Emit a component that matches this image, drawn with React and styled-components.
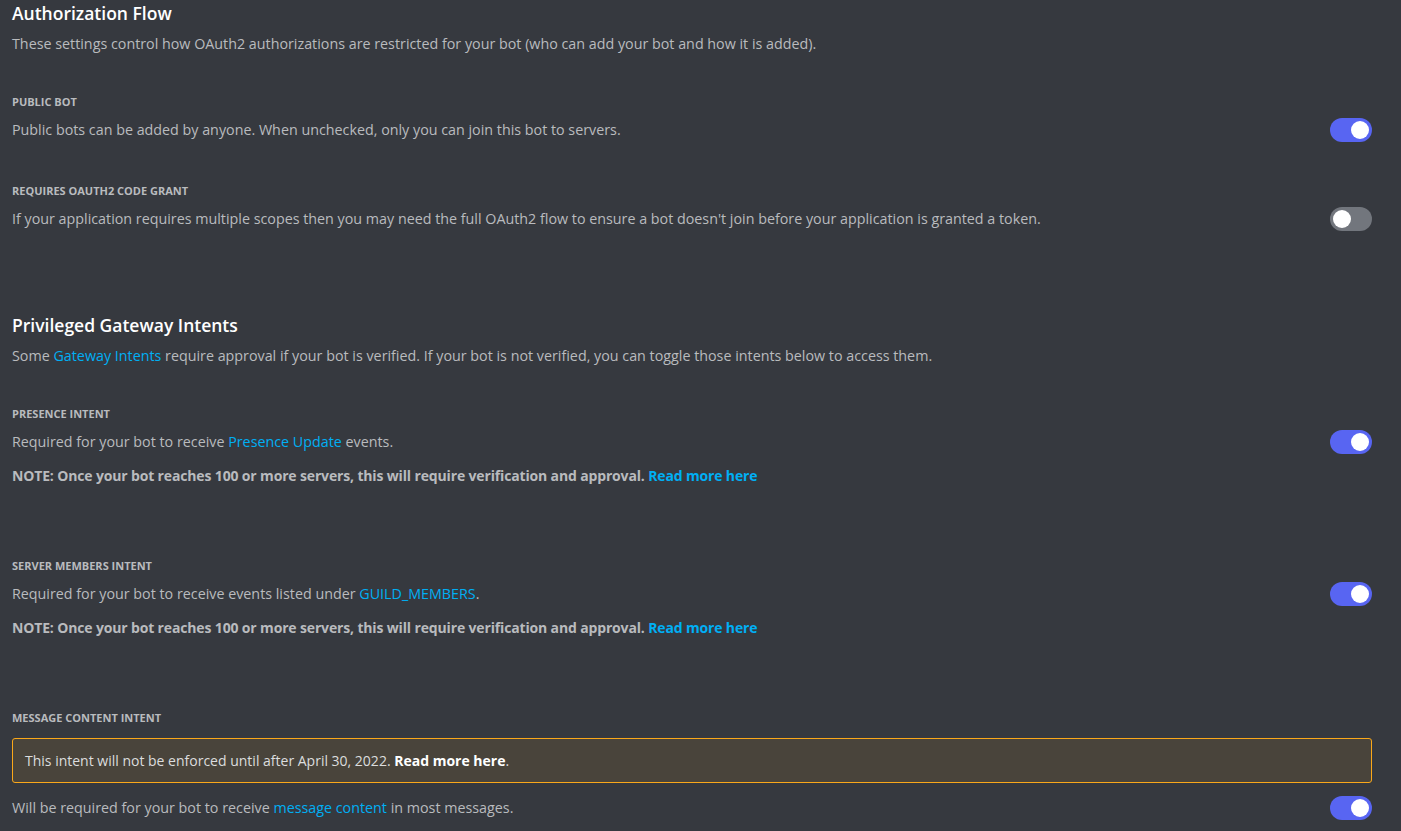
import React from 'react';
import styled, { createGlobalStyle } from 'styled-components';

const GlobalStyle = createGlobalStyle`
  html, body {
    margin: 0;
    padding: 0;
    background: #36393f;
  }
  body {
    font-family: "Open Sans", "Noto Sans", sans-serif;
    -webkit-font-smoothing: antialiased;
  }
`;

const Page = styled.main`
  min-height: 831px;
  box-sizing: border-box;
  padding: 1px 29px 0 12px;
  background: #36393f;
  color: #b9bbbe;
  overflow: hidden;
`;

const Section = styled.section`
  display: flex;
  flex-direction: column;
  margin-bottom: ${(p) => p.$gap || 0}px;
`;

const SectionTitle = styled.h2`
  margin: 0;
  font-size: 17.5px;
  line-height: 24px;
  font-weight: 600;
  color: #ffffff;
`;

const SectionDesc = styled.p`
  margin: 9px 0 0;
  font-size: 14.3px;
  line-height: 20px;
  color: #b9bbbe;
`;

const Setting = styled.div`
  display: flex;
  flex-direction: column;
  margin-top: ${(p) => p.$top}px;
`;

const Label = styled.h5`
  margin: 0 0 8px;
  font-size: 11px;
  line-height: 16px;
  font-weight: 700;
  text-transform: uppercase;
  color: #b9bbbe;
`;

const Row = styled.div`
  display: flex;
  align-items: center;
  justify-content: space-between;
  gap: 24px;
`;

const Text = styled.div`
  font-size: 14.3px;
  line-height: 20px;
  color: #b9bbbe;
`;

const Note = styled.div`
  margin-top: 12px;
  font-size: 14px;
  line-height: 20px;
  font-weight: 700;
  letter-spacing: -0.15px;
  color: #b9bbbe;
`;

const Link = styled.a`
  color: #00aff4;
  text-decoration: none;
  font-weight: inherit;
  cursor: pointer;
`;

const Toggle = styled.div`
  position: relative;
  flex-shrink: 0;
  width: 42px;
  height: 24px;
  border-radius: 12px;
  background: ${(p) => (p.$on ? '#5865f2' : '#72767d')};
`;

const Knob = styled.span`
  position: absolute;
  top: 3px;
  left: ${(p) => (p.$on ? '21px' : '3px')};
  width: 18px;
  height: 18px;
  border-radius: 50%;
  background: #ffffff;
`;

const Warning = styled.div`
  box-sizing: border-box;
  height: 45px;
  display: flex;
  align-items: center;
  padding: 0 12px;
  margin: 4px 0 13px;
  border: 1px solid #faa81a;
  border-radius: 3px;
  background: rgba(250, 168, 26, 0.1);
  font-size: 14px;
  line-height: 20px;
  color: #dcddde;

  strong {
    color: #ffffff;
    font-weight: 700;
  }
`;

const Switch = ({ on }) => (
  <Toggle $on={on}>
    <Knob $on={on} />
  </Toggle>
);

const App = () => (
  <>
    <GlobalStyle />
    <Page>
      <Section $gap={82}>
        <SectionTitle>Authorization Flow</SectionTitle>
        <SectionDesc>
          These settings control how OAuth2 authorizations are restricted for your bot (who can add your bot and how it is added).
        </SectionDesc>
        <Setting $top={40}>
          <Label>Public Bot</Label>
          <Row>
            <Text>Public bots can be added by anyone. When unchecked, only you can join this bot to servers.</Text>
            <Switch on />
          </Row>
        </Setting>
        <Setting $top={41}>
          <Label>Requires OAuth2 Code Grant</Label>
          <Row>
            <Text>
              If your application requires multiple scopes then you may need the full OAuth2 flow to ensure a bot doesn't join before your application is granted a token.
            </Text>
            <Switch on={false} />
          </Row>
        </Setting>
      </Section>

      <Section>
        <SectionTitle>Privileged Gateway Intents</SectionTitle>
        <SectionDesc>
          Some <Link>Gateway Intents</Link> require approval if your bot is verified. If your bot is not verified, you can toggle those intents below to access them.
        </SectionDesc>
        <Setting $top={40}>
          <Label>Presence Intent</Label>
          <Row>
            <Text>
              Required for your bot to receive <Link>Presence Update</Link> events.
            </Text>
            <Switch on />
          </Row>
          <Note>
            NOTE: Once your bot reaches 100 or more servers, this will require verification and approval. <Link>Read more here</Link>
          </Note>
        </Setting>
        <Setting $top={72}>
          <Label>Server Members Intent</Label>
          <Row>
            <Text>
              Required for your bot to receive events listed under <Link>GUILD_MEMBERS</Link>.
            </Text>
            <Switch on />
          </Row>
          <Note>
            NOTE: Once your bot reaches 100 or more servers, this will require verification and approval. <Link>Read more here</Link>
          </Note>
        </Setting>
        <Setting $top={72}>
          <Label>Message Content Intent</Label>
          <Warning>
            <span>
              This intent will not be enforced until after April 30, 2022. <strong>Read more here</strong>.
            </span>
          </Warning>
          <Row>
            <Text>
              Will be required for your bot to receive <Link>message content</Link> in most messages.
            </Text>
            <Switch on />
          </Row>
        </Setting>
      </Section>
    </Page>
  </>
);

export default App;
